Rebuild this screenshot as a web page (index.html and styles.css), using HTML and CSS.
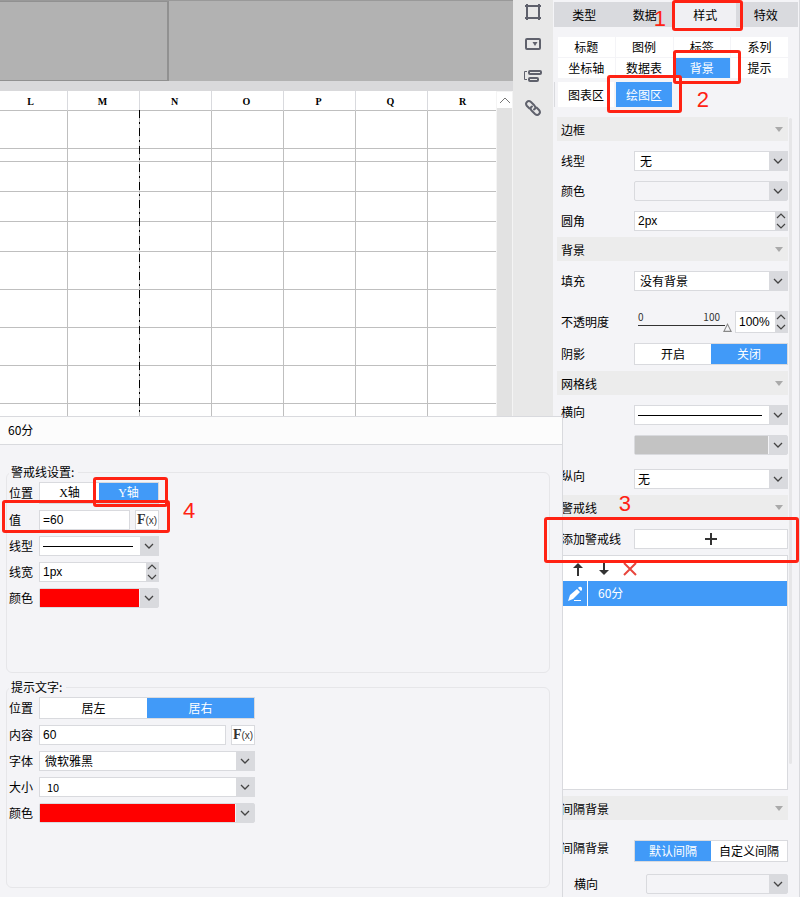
FILE: index.html
```html
<!DOCTYPE html>
<html lang="zh-CN">
<head>
  <meta charset="UTF-8" />
  <title>图表样式 - 警戒线</title>
  <link rel="stylesheet" href="styles.css">
</head>
<body>

<!-- Shared icons -->
<svg class="defs" width="0" height="0">
  <symbol id="chevron" viewBox="0 0 10 6"><path d="M1 1l4 4 4-4" fill="none" stroke="currentColor" stroke-width="1.3"/></symbol>
  <symbol id="spin" viewBox="0 0 12 18"><path d="M2 6l4-4 4 4M2 12l4 4 4-4" fill="none" stroke="currentColor" stroke-width="1.2"/></symbol>
</svg>

<div class="app">
  <main class="sheet">
    <div class="chart-area"><div class="chart-box"></div></div>
    <div class="sheet-bar"></div>
    <div class="sheet-body">
      <div class="grid">
        <table>
          <thead>
            <tr><th>L</th><th>M</th><th>N</th><th>O</th><th>P</th><th>Q</th><th>R</th></tr>
          </thead>
          <tbody>
            <tr class="tall"><td></td><td></td><td></td><td></td><td></td><td></td><td></td></tr>
            <tr class="short"><td></td><td></td><td></td><td></td><td></td><td></td><td></td></tr>
            <tr><td></td><td></td><td></td><td></td><td></td><td></td><td></td></tr>
            <tr><td></td><td></td><td></td><td></td><td></td><td></td><td></td></tr>
            <tr><td></td><td></td><td></td><td></td><td></td><td></td><td></td></tr>
            <tr class="tall"><td></td><td></td><td></td><td></td><td></td><td></td><td></td></tr>
            <tr class="tall"><td></td><td></td><td></td><td></td><td></td><td></td><td></td></tr>
            <tr class="tall"><td></td><td></td><td></td><td></td><td></td><td></td><td></td></tr>
            <tr class="tall"><td></td><td></td><td></td><td></td><td></td><td></td><td></td></tr>
            <tr class="tall"><td></td><td></td><td></td><td></td><td></td><td></td><td></td></tr>
          </tbody>
        </table>
        <div class="page-break"></div>
      </div>
      <div class="scrollbar">
        <button aria-label="向上滚动"><svg width="12" height="7" viewBox="0 0 12 7"><path d="M1 6l5-5 5 5" fill="none" stroke="#777" stroke-width="1"/></svg></button>
      </div>
    </div>
  </main>

  <nav class="rail">
    <button aria-label="边框"><svg width="18" height="18" viewBox="0 0 18 18"><path d="M1 3h16M1 15h16M3 1v16M15 1v16" fill="none" stroke="#5f616c" stroke-width="2"/></svg></button>
    <button aria-label="控件"><svg width="18" height="18" viewBox="0 0 18 18"><rect x="2" y="4" width="14" height="10" rx="1" fill="none" stroke="#5f616c" stroke-width="2"/><path d="M8.500 7h5l-2.500 4z" fill="#5f616c"/></svg></button>
    <button aria-label="条件"><svg width="20" height="18" viewBox="0 0 20 18"><path d="M4 4.500H1.500v8H4" fill="none" stroke="#5f616c" stroke-width="1"/><rect x="6" y="4" width="12" height="3" rx="1" fill="none" stroke="#5f616c" stroke-width="2"/><rect x="6" y="11" width="9" height="3" rx="1" fill="none" stroke="#5f616c" stroke-width="2"/></svg></button>
    <button aria-label="超链接"><svg width="18" height="18" viewBox="0 0 18 18"><g fill="none" stroke="#5f616c" stroke-width="2" stroke-linecap="round"><path d="M5.500 9.500L3 7C0.500 4 4 0.500 7 3L10 6C12 8 11.500 10 10 10.500"/><path d="M12.500 8.500L15 11C17.500 14 14 17.500 11 15L8 12C6 10 6.500 8 8 7.500"/></g></svg></button>
  </nav>

  <aside class="panel">
    <div class="tabs">
      <button>类型</button><button>数据</button><button class="active">样式</button><button>特效</button>
    </div>
    <div class="subtabs">
      <button>标题</button><button>图例</button><button>标签</button><button>系列</button>
      <button>坐标轴</button><button>数据表</button><button class="on">背景</button><button>提示</button>
    </div>
    <div class="areas"><button>图表区</button><button class="on">绘图区</button></div>

    <div class="settings">
      <section>
        <h2>边框</h2>
        <div class="rows">
          <div class="row">
            <label for="border-line">线型</label>
            <div class="select"><select id="border-line"><option>无</option></select><span class="arrow"><svg><use href="#chevron"/></svg></span></div>
          </div>
          <div class="row">
            <label for="border-color">颜色</label>
            <button class="color" id="border-color"><span class="swatch"></span><span class="arrow"><svg><use href="#chevron"/></svg></span></button>
          </div>
          <div class="row">
            <label for="radius">圆角</label>
            <div class="spinner"><input id="radius" type="text" value="2px"><span class="spin"><svg><use href="#spin"/></svg></span></div>
          </div>
        </div>
      </section>

      <section>
        <h2>背景</h2>
        <div class="rows">
          <div class="row">
            <label for="fill">填充</label>
            <div class="select"><select id="fill"><option>没有背景</option></select><span class="arrow"><svg><use href="#chevron"/></svg></span></div>
          </div>
          <div class="row opacity">
            <label for="opacity">不透明度</label>
            <div class="slider">
              <div class="scale"><span>0</span><span>100</span></div>
              <input id="opacity" type="range" min="0" max="100" value="100">
            </div>
            <div class="spinner percent"><input type="text" value="100%" aria-label="不透明度百分比"><span class="spin"><svg><use href="#spin"/></svg></span></div>
          </div>
          <div class="row">
            <span class="label">阴影</span>
            <div class="segment"><button>开启</button><button class="on">关闭</button></div>
          </div>
        </div>
      </section>

      <section>
        <h2>网格线</h2>
        <div class="rows">
          <div class="row raised">
            <label for="grid-h">横向</label>
            <div class="select"><select id="grid-h" class="line"><option></option></select><span class="arrow"><svg><use href="#chevron"/></svg></span></div>
          </div>
          <div class="row">
            <span class="label"></span>
            <button class="color" aria-label="横向颜色"><span class="swatch gray"></span><span class="arrow"><svg><use href="#chevron"/></svg></span></button>
          </div>
          <div class="row raised spaced">
            <label for="grid-v">纵向</label>
            <div class="select"><select id="grid-v" class="tight"><option>无</option></select><span class="arrow"><svg><use href="#chevron"/></svg></span></div>
          </div>
        </div>
      </section>

      <section>
        <h2>警戒线</h2>
        <div class="rows">
          <div class="row">
            <label for="add-line">添加警戒线</label>
            <button class="add" id="add-line"><svg width="14" height="14" viewBox="0 0 14 14"><path d="M7 1v12M1 7h12" stroke="#333" stroke-width="2"/></svg></button>
          </div>
        </div>
        <div class="list">
          <div class="list-tools">
            <button aria-label="上移"><svg width="14" height="14" viewBox="0 0 14 14"><path d="M7 14V4" stroke="#333" stroke-width="2"/><path d="M2 6l5-5 5 5z" fill="#333"/></svg></button>
            <button aria-label="下移"><svg width="14" height="14" viewBox="0 0 14 14"><path d="M7 0v9" stroke="#333" stroke-width="2"/><path d="M2 8l5 5 5-5z" fill="#333"/></svg></button>
            <button aria-label="删除"><svg width="14" height="14" viewBox="0 0 14 14"><path d="M1 1l12 12M13 1L1 13" stroke="#e8453c" stroke-width="2"/></svg></button>
          </div>
          <div class="list-item">
            <button aria-label="编辑"><svg width="16" height="16" viewBox="0 0 16 16"><path d="M1 15l2-6 7-6 3 3-7 7zM11 2l1-1q2-1 3 1v2l-1 1z" fill="#fff"/><path d="M7 14.500h7" stroke="#fff"/></svg></button>
            <span>60分</span>
          </div>
        </div>
      </section>

      <section>
        <h2>间隔背景</h2>
        <div class="rows interval">
          <div class="row raised">
            <span class="label">间隔背景</span>
            <div class="segment"><button class="on">默认间隔</button><button>自定义间隔</button></div>
          </div>
          <div class="row nested">
            <label for="interval-color">横向</label>
            <button class="color" id="interval-color"><span class="swatch"></span><span class="arrow"><svg><use href="#chevron"/></svg></span></button>
          </div>
        </div>
      </section>
    </div>
    <div class="track"></div>
  </aside>

  <!-- Alert line dialog -->
  <div class="dialog">
    <h1>60分</h1>
    <form>
      <fieldset>
        <legend>警戒线设置:</legend>
        <div class="row">
          <span class="label">位置</span>
          <div class="segment axis"><button type="button">X轴</button><button type="button" class="on">Y轴</button></div>
        </div>
        <div class="row">
          <label for="value">值</label>
          <input id="value" type="text" value="=60">
          <button type="button" class="fx">F<small>(x)</small></button>
        </div>
        <div class="row">
          <label for="line-type">线型</label>
          <div class="select"><select id="line-type" class="line"><option></option></select><span class="arrow"><svg><use href="#chevron"/></svg></span></div>
        </div>
        <div class="row">
          <label for="line-width">线宽</label>
          <div class="spinner"><input id="line-width" type="text" value="1px"><span class="spin"><svg><use href="#spin"/></svg></span></div>
        </div>
        <div class="row">
          <label for="line-color">颜色</label>
          <button type="button" class="color" id="line-color"><span class="swatch red"></span><span class="arrow"><svg><use href="#chevron"/></svg></span></button>
        </div>
      </fieldset>

      <fieldset class="wide">
        <legend>提示文字:</legend>
        <div class="row">
          <span class="label">位置</span>
          <div class="segment"><button type="button">居左</button><button type="button" class="on">居右</button></div>
        </div>
        <div class="row">
          <label for="content">内容</label>
          <input id="content" type="text" value="60">
          <button type="button" class="fx">F<small>(x)</small></button>
        </div>
        <div class="row">
          <label for="font">字体</label>
          <div class="select"><select id="font"><option>微软雅黑</option></select><span class="arrow"><svg><use href="#chevron"/></svg></span></div>
        </div>
        <div class="row">
          <label for="size">大小</label>
          <div class="select"><select id="size" class="small"><option>10</option></select><span class="arrow"><svg><use href="#chevron"/></svg></span></div>
        </div>
        <div class="row">
          <label for="text-color">颜色</label>
          <button type="button" class="color" id="text-color"><span class="swatch red"></span><span class="arrow"><svg><use href="#chevron"/></svg></span></button>
        </div>
      </fieldset>
    </form>
  </div>

  <!-- Step marks -->
  <div class="mark mark-style"></div>
  <div class="mark mark-background"></div>
  <div class="mark mark-plot"></div>
  <div class="mark mark-add"></div>
  <div class="mark mark-axis"></div>
  <div class="mark mark-value"></div>
  <span class="step step-1">1</span>
  <span class="step step-2">2</span>
  <span class="step step-3">3</span>
  <span class="step step-4">4</span>
</div>

</body>
</html>
```
FILE: styles.css
```css
* {
  box-sizing: border-box;
}

body {
  margin: 0;
  background: #f4f4f7;
}

body, button, input, select {
  font-family: "Noto Sans CJK SC", sans-serif;
  font-size: 12px;
  line-height: 18px;
  color: #000;
}

button {
  margin: 0;
  padding: 0;
  border: 0;
  background: #fff;
  white-space: nowrap;
}

.defs {
  position: absolute;
}

.app {
  position: relative;
  display: flex;
  min-height: 100vh;
  overflow: hidden;
}

/* Spreadsheet */
.sheet {
  flex: 1;
  min-width: 0;
  display: flex;
  flex-direction: column;
  background: #fff;
}

.chart-area {
  height: 81px;
  background: #b2b2b2;
  border-top: 1px solid #999;
}

.chart-box {
  width: 33%;
  height: 80px;
  border: solid #919191;
  border-width: 1px 2px 1px 0;
}

.sheet-bar {
  height: 10px;
  background: #d9d9db;
}

.sheet-body {
  flex: 1;
  display: flex;
}

.grid {
  position: relative;
  flex: 1;
  min-width: 0;
  overflow: hidden;
}

.grid table {
  table-layout: fixed;
  width: 504px;
  margin-left: -4px;
  border-collapse: separate;
  border-spacing: 0;
}

.grid th, .grid td {
  height: 30px;
  padding: 0;
  border-right: 1px solid #bfbfbf;
  border-bottom: 1px solid #bfbfbf;
}

.grid th {
  height: 20px;
  padding: 2px 2px 0 0;
  font: bold 10px/17px "Liberation Serif", serif;
  border-right-color: #d9dade;
}

.grid .tall td {
  height: 38px;
}

.grid .short td {
  height: 13px;
}

.page-break {
  position: absolute;
  left: 139px;
  top: 19px;
  bottom: 0;
  width: 1px;
  background: repeating-linear-gradient(#000 0 8px, #bfbfbf 8px 12px, #000 12px 14px, #bfbfbf 14px 18px);
}

.scrollbar {
  width: 17px;
  border: solid #f4f4f4;
  border-width: 1px 1px 0;
  background: #e2e2e2;
}

.scrollbar button {
  display: flex;
  align-items: center;
  justify-content: center;
  width: 100%;
  height: 16px;
}

.rail {
  width: 40px;
  padding-top: 3px;
  display: flex;
  flex-direction: column;
  align-items: center;
  gap: 14px;
  background: #e8e8e8;
}

.rail button {
  display: flex;
  background: none;
}

/* Style panel */
.panel {
  position: relative;
  width: 247px;
  padding: 2px 1px 0;
  border-right: 1px solid #d9dade;
}

.tabs {
  display: flex;
  height: 25px;
  padding-right: 2px;
  background: #d9dade;
}

.tabs button {
  flex: 1;
  background: none;
}

.tabs .active {
  background: #f0f0f3;
}

.subtabs {
  display: grid;
  grid-template-columns: repeat(4, 1fr);
  grid-auto-rows: 20px;
  gap: 1px;
  margin: 10px 10px 0 4px;
}

.areas {
  display: flex;
  height: 25px;
  width: 118px;
  margin: 4px 0 10px;
  padding-left: 3px;
  gap: 2px;
  border-left: 1px solid #d9dade;
}

.areas button {
  flex: 1;
}

.areas .on, .subtabs .on, .segment .on {
  background: #419af8;
  color: #fff;
}

.settings {
  margin: 0 10px 0 3px;
}

h2 {
  position: relative;
  height: 24px;
  margin: 0;
  padding-left: 4px;
  background: #ececec;
  font-size: 12px;
  font-weight: normal;
  line-height: 25px;
}

h2::after {
  content: "";
  position: absolute;
  top: 10px;
  right: 5px;
  border: solid transparent;
  border-width: 5px 4px 0;
  border-top-color: #aaa;
}

.rows {
  display: flex;
  flex-direction: column;
  gap: 10px;
  padding: 10px 0 6px;
}

.rows.interval {
  gap: 12px;
  padding-top: 20px;
  padding-bottom: 0;
}

.row {
  display: flex;
  align-items: center;
}

.row > label, .row > .label {
  flex: none;
  width: 77px;
  padding-left: 4px;
}

.raised > label, .raised > .label {
  margin-bottom: 6px;
  line-height: 14px;
}

.spaced {
  margin-top: 4px;
}

.row.opacity {
  margin-top: 10px;
}

.row.nested > label {
  width: 89px;
  padding-left: 17px;
}

/* Controls */
.select, .spinner, .color, .segment {
  display: flex;
  flex: 1;
  min-width: 0;
  height: 20px;
  border: 1px solid #d9dade;
  background: #fff;
}

.color {
  border-radius: 2px;
  background: #f4f4f7;
}

select {
  flex: 1;
  min-width: 0;
  padding: 0 5px;
  border: 0;
  background: #fff;
  appearance: none;
}

select.tight {
  padding: 0 3px;
}

select.line {
  background: linear-gradient(#000, #000) 3px 9px / calc(100% - 10px) 1px no-repeat #fff;
}

select.small {
  padding: 0 7px;
  font-size: 11px;
}

input[type="text"] {
  flex: 1;
  min-width: 0;
  height: 20px;
  padding: 0 3px;
  border: 1px solid #d9dade;
  background: #fff;
  font-family: "Liberation Sans", sans-serif;
}

.spinner input[type="text"] {
  height: 100%;
  border: 0;
}

.arrow, .spin {
  flex: none;
  display: flex;
  align-items: center;
  justify-content: center;
  width: 18px;
  background: #d9dade;
  color: #444;
  pointer-events: none;
}

.spin {
  width: 12px;
}

.arrow svg {
  width: 10px;
  height: 6px;
}

.spin svg {
  width: 12px;
  height: 18px;
}

.color .arrow {
  height: 18px;
}

.swatch {
  flex: 1;
  height: 18px;
}

.swatch.gray {
  margin-right: 1px;
  background: #c3c3c3;
}

.swatch.red {
  margin-right: 1px;
  background: #f00;
}

.segment {
  height: 22px;
}

.segment button {
  flex: 1;
}

.segment.axis button {
  font-family: "Liberation Serif", "Noto Sans CJK SC", serif;
}

.slider {
  flex: 1;
  min-width: 0;
  height: 22px;
  padding: 0 3px 0 4px;
}

.scale {
  display: flex;
  justify-content: space-between;
  padding-right: 12px;
  font-size: 10px;
  line-height: 12px;
  color: #333;
}

.slider input {
  display: block;
  width: 100%;
  height: 9px;
  margin: 0;
  background: linear-gradient(#333, #333) 0 2px / calc(100% - 7px) 1px no-repeat;
  appearance: none;
}

.slider input::-webkit-slider-thumb {
  width: 9px;
  height: 9px;
  background: #888;
  appearance: none;
  clip-path: polygon(50% 0, 100% 100%, 0 100%, 50% 0, 50% 25%, 20% 86%, 80% 86%, 50% 25%);
}

.spinner.percent {
  flex: none;
  width: 53px;
  height: 22px;
}

.add {
  display: flex;
  flex: 1;
  align-items: center;
  justify-content: center;
  height: 20px;
  border: 1px solid #d9dade;
}

.list {
  height: 235px;
  margin: 0 0 6px 5px;
  border: 1px solid #d9dade;
  background: #fff;
}

.list-tools {
  display: flex;
  gap: 12px;
  height: 25px;
  padding: 0 8px;
}

.list-tools button, .list-item button {
  display: flex;
  align-items: center;
}

.list-item {
  display: flex;
  height: 25px;
  background: #419af8;
  color: #fff;
  line-height: 24px;
}

.list-item button {
  justify-content: center;
  width: 25px;
  border-right: 1px solid #fff;
  background: none;
}

.list-item span {
  padding-left: 10px;
}

.track {
  position: absolute;
  top: 118px;
  right: 7px;
  width: 3px;
  height: 646px;
  border-radius: 2px;
  background: #e6e6e8;
}

/* Dialog */
.dialog {
  position: absolute;
  top: 416px;
  left: 0;
  right: 237px;
  bottom: 0;
  border: solid #d9dade;
  border-width: 1px 1px 0 0;
  background: #f4f4f7;
}

.dialog h1 {
  height: 28px;
  margin: 0;
  padding-left: 8px;
  border-bottom: 1px solid #d9dade;
  background: #fcfcfc;
  font-size: 12px;
  font-weight: normal;
  line-height: 26px;
}

.dialog form {
  padding: 17px 12px 0 6px;
}

fieldset {
  min-width: 0;
  min-height: 211px;
  margin: 0 0 4px;
  padding: 0 0 0 2px;
  border: 1px solid #e6e6e9;
  border-radius: 6px;
}

legend {
  padding: 0 4px 0 2px;
  line-height: 20px;
}

fieldset .row {
  width: 150px;
  margin-bottom: 6px;
}

fieldset.wide .row {
  width: 246px;
}

fieldset .row > label, fieldset .row > .label {
  width: 30px;
  padding: 0;
}

.fx {
  flex: none;
  width: 24px;
  height: 20px;
  margin-left: 5px;
  border: 1px solid #d9dade;
  color: #333;
  font: bold 14px/18px "Liberation Serif", serif;
}

.fx small {
  font: 10px "Liberation Sans", sans-serif;
}

/* Step marks */
.mark {
  position: absolute;
  border: 3px solid #ff2213;
  border-radius: 3px;
  pointer-events: none;
}

.mark-style {
  top: 0;
  right: 57px;
  width: 71px;
  height: 31px;
}

.mark-background {
  top: 50px;
  right: 59px;
  width: 68px;
  height: 34px;
}

.mark-plot {
  top: 75px;
  right: 118px;
  width: 75px;
  height: 38px;
}

.mark-add {
  top: 517px;
  right: 1px;
  width: 255px;
  height: 46px;
}

.mark-axis {
  top: 477px;
  left: 93px;
  width: 75px;
  height: 30px;
}

.mark-value {
  top: 500px;
  left: 2px;
  width: 168px;
  height: 33px;
}

.step {
  position: absolute;
  color: #ff2213;
  font: 22px/24px "Liberation Sans", sans-serif;
}

.step-1 {
  top: 7px;
  right: 134px;
}

.step-2 {
  top: 88px;
  right: 91px;
}

.step-3 {
  top: 492px;
  right: 169px;
}

.step-4 {
  top: 499px;
  left: 183px;
}
```
